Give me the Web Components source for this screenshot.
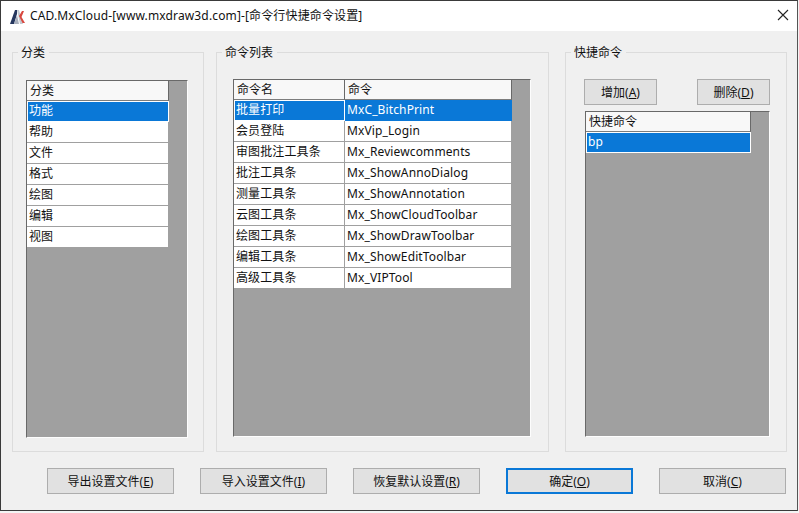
<!DOCTYPE html>
<html>
<head>
<meta charset="utf-8">
<title>CAD.MxCloud</title>
<style>
    html, body { margin: 0; padding: 0; background: #f4f4f4; }
    body { font: 12px "Noto Sans", "Noto Sans CJK SC", sans-serif; color: #111; }
</style>
</head>
<body>
<template id="tpl-dialog">
    <style>
        :host {
            display: flex;
            flex-direction: column;
            box-sizing: border-box;
            width: 798px;
            height: 511px;
            border: 1px solid #3a3a3a;
            border-right-color: #555;
            background: #f0f0f0;
        }
        .groups {
            display: flex;
            padding: 21px 11px 0 11px;
            height: 400px;
        }
        .actions {
            display: flex;
            gap: 26px;
            padding: 16px 0 0 46px;
        }
    </style>
    <slot name="title"></slot>
    <div class="groups"><slot name="group"></slot></div>
    <div class="actions"><slot name="action"></slot></div>
</template>

<template id="tpl-title">
    <style>
        :host {
            display: flex;
            align-items: center;
            height: 30px;
            background: #fff;
            font: 12px "Noto Sans", "Noto Sans CJK SC", sans-serif;
            color: #111;
            flex: none;
        }
        svg.logo { margin: 0 4px 0 8px; flex: none; }
        .text { flex: 1; white-space: nowrap; letter-spacing: .14px; padding-bottom: 2px; }
        svg.close { margin: 0 8px 2px 0; flex: none; }
    </style>
    <svg class="logo" width="17" height="17" viewBox="0 0 17 17">
        <path d="M1 16 L6 2 L8 2 L8 6 L5 16 Z" fill="#26375f"/>
        <path d="M5 16 L8 7 L10 16 Z" fill="#a9b0bd"/>
        <path d="M8 2 L10 2 L14 16 L11 16 Z" fill="#c3c8d0"/>
        <path d="M10 8 L13 3 L15 3 L12.5 9 L16 15 L13.5 15 Z" fill="#d8483f"/>
    </svg>
    <span class="text"><slot></slot></span>
    <svg class="close" width="12" height="12" viewBox="0 0 12 12">
        <path d="M1 1 L11 11 M11 1 L1 11" stroke="#222" stroke-width="1.1" fill="none"/>
    </svg>
</template>

<template id="tpl-group">
    <style>
        :host {
            display: block;
            position: relative;
            box-sizing: border-box;
            border: 1px solid #dcdcdc;
            padding: 27px 13px 15px 13px;
            height: 400px;
            flex: none;
        }
        .legend {
            position: absolute;
            top: -7px;
            left: 5px;
            padding: 0 4px 0 3px;
            background: #f0f0f0;
            line-height: 14px;
        }
    </style>
    <span class="legend"></span>
    <slot></slot>
</template>

<template id="tpl-grid">
    <style>
        :host {
            display: block;
            box-sizing: border-box;
            background: #a0a0a0;
            border-style: solid;
            border-width: 1px;
            border-color: #696969 #fdfdfd #fdfdfd #696969;
            overflow: hidden;
            font-size: 12px;
        }
        .table { display: grid; width: max-content; }
        .cell {
            box-sizing: border-box;
            height: 21px;
            line-height: 19px;
            padding-left: 2px;
            background: #fff;
            border-right: 1px solid #a0a0a0;
            border-bottom: 1px solid #a0a0a0;
            white-space: nowrap;
            overflow: hidden;
            color: #111;
            letter-spacing: .12px;
        }
        .head {
            height: 20px;
            line-height: 19px;
            background: #f8f8f8;
            border-right-color: #696969;
            border-bottom-color: #7d7d7d;
            padding-left: 3px;
            letter-spacing: 0;
        }
        .sel { background: #0a78d7; color: #fff; border-color: #0a78d7; }
        .focus { border: 1px solid #fff; padding-left: 1px; line-height: 17px; }
    </style>
    <div class="table"></div>
</template>

<template id="tpl-button">
    <style>
        :host {
            display: flex;
            align-items: center;
            justify-content: center;
            box-sizing: border-box;
            height: 26px;
            background: #e1e1e1;
            border: 1px solid #adadad;
            font-size: 12px;
            color: #111;
            flex: none;
            white-space: nowrap;
        }
        :host([default]) { border: 2px solid #0a78d7; }
    </style>
    <slot></slot>
</template>

<template id="tpl-toolbar">
    <style>
        :host {
            display: flex;
            justify-content: space-between;
            margin: 0 3px 6px 5px;
        }
    </style>
    <slot></slot>
</template>

<cad-dialog>
    <cad-title slot="title">CAD.MxCloud-[www.mxdraw3d.com]-[命令行快捷命令设置]</cad-title>

    <cad-group slot="group" legend="分类" style="width:192px">
        <cad-grid style="width:162px;height:358px" cols="142" head="分类"
            rows="功能;帮助;文件;格式;绘图;编辑;视图"></cad-grid>
    </cad-group>

    <cad-group slot="group" legend="命令列表" style="width:333px;margin-left:12px;padding:26px 13px 15px 16px">
        <cad-grid style="width:298px;height:358px" cols="111,167" head="命令名|命令"
            rows="批量打印|MxC_BitchPrint;会员登陆|MxVip_Login;审图批注工具条|Mx_Reviewcomments;批注工具条|Mx_ShowAnnoDialog;测量工具条|Mx_ShowAnnotation;云图工具条|Mx_ShowCloudToolbar;绘图工具条|Mx_ShowDrawToolbar;编辑工具条|Mx_ShowEditToolbar;高级工具条|Mx_VIPTool"></cad-grid>
    </cad-group>

    <cad-group slot="group" legend="快捷命令" style="width:222px;margin-left:16px;padding-top:26px">
        <cad-toolbar>
            <cad-button style="width:73px">增加(<u>A</u>)</cad-button>
            <cad-button style="width:73px">删除(<u>D</u>)</cad-button>
        </cad-toolbar>
        <cad-grid style="width:185px;height:326px;margin-left:6px" cols="165" head="快捷命令" rows="bp"></cad-grid>
    </cad-group>

    <cad-button slot="action" style="width:127px">导出设置文件(<u>E</u>)</cad-button>
    <cad-button slot="action" style="width:127px">导入设置文件(<u>I</u>)</cad-button>
    <cad-button slot="action" style="width:127px">恢复默认设置(<u>R</u>)</cad-button>
    <cad-button slot="action" style="width:127px" default>确定(<u>O</u>)</cad-button>
    <cad-button slot="action" style="width:127px">取消(<u>C</u>)</cad-button>
</cad-dialog>

<script>
class TemplatedElement extends HTMLElement {
    constructor(tplId) {
        super();
        this.attachShadow({ mode: 'open' });
        this.shadowRoot.appendChild(document.getElementById(tplId).content.cloneNode(true));
    }
}

class CadDialog extends TemplatedElement {
    constructor() { super('tpl-dialog'); }
}
customElements.define('cad-dialog', CadDialog);

class CadTitle extends TemplatedElement {
    constructor() { super('tpl-title'); }
}
customElements.define('cad-title', CadTitle);

class CadGroup extends TemplatedElement {
    constructor() { super('tpl-group'); }
    connectedCallback() {
        this.shadowRoot.querySelector('.legend').textContent = this.getAttribute('legend');
    }
}
customElements.define('cad-group', CadGroup);

class CadButton extends TemplatedElement {
    constructor() { super('tpl-button'); }
}
customElements.define('cad-button', CadButton);

class CadToolbar extends TemplatedElement {
    constructor() { super('tpl-toolbar'); }
}
customElements.define('cad-toolbar', CadToolbar);

class CadGrid extends TemplatedElement {
    constructor() { super('tpl-grid'); }
    connectedCallback() {
        const table = this.shadowRoot.querySelector('.table');
        const cols = this.getAttribute('cols').split(',');
        table.style.gridTemplateColumns = cols.map(c => c + 'px').join(' ');
        const addCell = (text, cls) => {
            const cell = document.createElement('div');
            cell.className = 'cell ' + cls;
            cell.textContent = text;
            table.appendChild(cell);
        };
        this.getAttribute('head').split('|').forEach(t => addCell(t, 'head'));
        this.getAttribute('rows').split(';').forEach((row, r) => {
            row.split('|').forEach((t, c) => {
                // first row is the selected one, its first cell has the focus frame
                addCell(t, r === 0 ? (c === 0 ? 'sel focus' : 'sel') : '');
            });
        });
    }
}
customElements.define('cad-grid', CadGrid);
</script>
</body>
</html>
